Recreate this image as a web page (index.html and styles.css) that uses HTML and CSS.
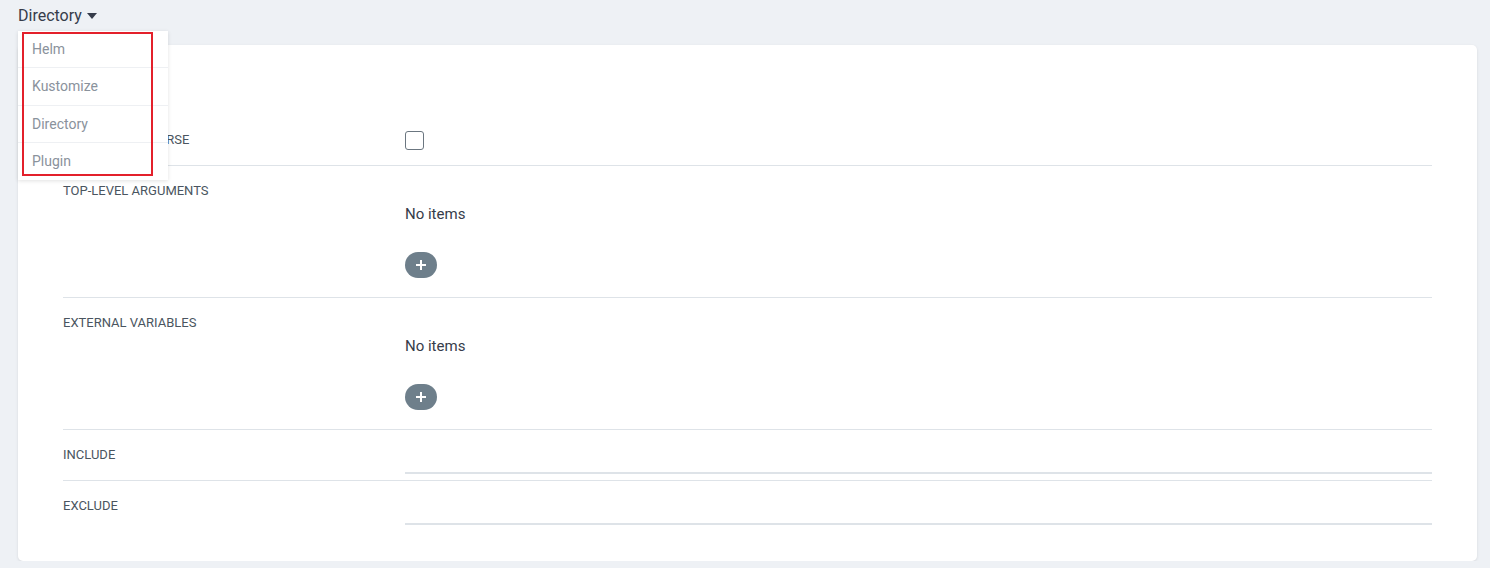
FILE: index.html
```html
<!DOCTYPE html>
<html lang="en">
<head>
    <meta charset="UTF-8">
    <meta name="viewport" content="width=device-width, initial-scale=1.0">
    <title>Source</title>
    <link rel="stylesheet" href="styles.css">
</head>
<body>
    <div class="source-type">
        <div class="dropdown-toggle">Directory <span class="caret"></span></div>
        <ul class="dropdown-menu">
            <li>Helm</li>
            <li>Kustomize</li>
            <li>Directory</li>
            <li>Plugin</li>
            <div class="highlight"></div>
        </ul>
    </div>

    <div class="card">
        <div class="row row-check">
            <div class="label">DIRECTORY RECURSE</div>
            <div class="value"><span class="checkbox"></span></div>
        </div>
        <div class="row row-list">
            <div class="label">TOP-LEVEL ARGUMENTS</div>
            <div class="value">
                <div class="empty">No items</div>
                <button class="add">
                    <svg width="12" height="12" viewBox="0 0 12 12"><path d="M6 1v10M1 6h10" stroke="#fff" stroke-width="2"/></svg>
                </button>
            </div>
        </div>
        <div class="row row-list">
            <div class="label">EXTERNAL VARIABLES</div>
            <div class="value">
                <div class="empty">No items</div>
                <button class="add">
                    <svg width="12" height="12" viewBox="0 0 12 12"><path d="M6 1v10M1 6h10" stroke="#fff" stroke-width="2"/></svg>
                </button>
            </div>
        </div>
        <div class="row row-input">
            <div class="label">INCLUDE</div>
            <div class="value"><input type="text" class="field"></div>
        </div>
        <div class="row row-input">
            <div class="label">EXCLUDE</div>
            <div class="value"><input type="text" class="field"></div>
        </div>
    </div>
</body>
</html>
```

FILE: styles.css
```css
body {
    font-family: Roboto, "Liberation Sans", sans-serif;
    margin: 0;
    padding: 0;
    background-color: #eef1f5;
    color: #363c4a;
}

.source-type {
    position: relative;
    height: 45px;
    padding-left: 18px;
}

.dropdown-toggle {
    display: inline-flex;
    align-items: center;
    gap: 5px;
    font-size: 16px;
    line-height: 20px;
    padding-top: 6px;
}

.caret {
    width: 0;
    height: 0;
    border-left: 5px solid transparent;
    border-right: 5px solid transparent;
    border-top: 6px solid #363c4a;
}

.dropdown-menu {
    position: absolute;
    top: 31px;
    left: 18px;
    z-index: 2;
    width: 150px;
    margin: 0;
    padding: 0;
    list-style: none;
    background: #ffffff;
    box-shadow: 0 1px 4px rgba(0, 0, 0, 0.12);
}

.dropdown-menu li {
    height: 36.4px;
    line-height: 36.4px;
    padding-left: 14px;
    font-size: 14px;
    color: #8a929c;
    border-bottom: 1px solid #eef0f3;
}

.dropdown-menu li:last-of-type {
    border-bottom: none;
}

/* red frame round the open list */
.highlight {
    position: absolute;
    top: 1px;
    left: 4px;
    width: 127px;
    height: 140px;
    border: 2px solid #e3202b;
}

.card {
    margin: 0 13px 0 18px;
    padding: 69px 45px 30px;
    background: #ffffff;
    border-radius: 5px;
    box-shadow: 0 1px 3px rgba(0, 0, 0, 0.1);
}

.row {
    display: grid;
    grid-template-columns: 342px 1fr;
    border-bottom: 1px solid #dee3e8;
}

.row:last-child {
    border-bottom: none;
}

.label {
    font-size: 13px;
    line-height: 14px;
    color: #4a5560;
}

.row-list .label,
.row-input .label {
    margin-top: 1px;
}

.row-check {
    padding: 16px 0 15px;
    align-items: center;
}

.row-check .label {
    line-height: 20px;
}

.checkbox {
    display: block;
    width: 17px;
    height: 17px;
    border: 1.5px solid #6b7680;
    border-radius: 3px;
}

.row-list {
    padding: 17px 0 19px;
}

.empty {
    margin-top: 21px;
    font-size: 15px;
    line-height: 20px;
}

.add {
    display: flex;
    align-items: center;
    justify-content: center;
    margin-top: 28px;
    width: 32px;
    height: 26px;
    padding: 0;
    border: none;
    border-radius: 13px;
    background: #6e7f8b;
}

.add svg {
    display: block;
}

.row-input {
    padding: 17px 0 6px;
}

.field {
    display: block;
    box-sizing: border-box;
    width: 100%;
    height: 27px;
    border: none;
    border-bottom: 2px solid #dee3e8;
    outline: none;
}
```
